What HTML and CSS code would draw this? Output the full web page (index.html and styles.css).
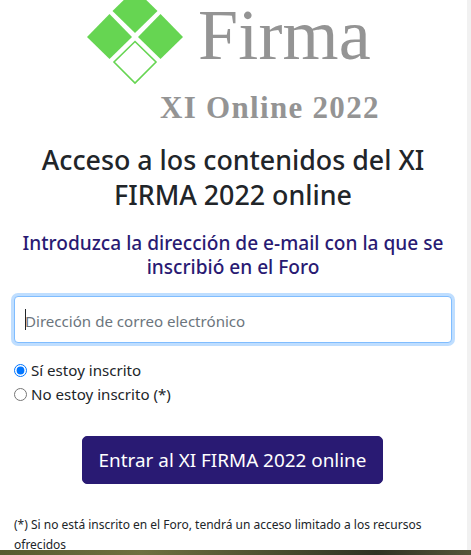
FILE: index.html
```html
<!DOCTYPE html>
<html lang="es">

<head>
    <meta charset="UTF-8">
    <meta name="viewport" content="width=device-width, initial-scale=1.0">
    <title>Acceso XI FIRMA 2022 online</title>
    <link rel="stylesheet" href="styles.css">
</head>

<body>
    <div class="card">
        <!-- Logo -->
        <div class="logo">
            <div class="logo-top">
                <svg class="logo-mark" width="98" height="86" viewBox="0 0 98 86">
                    <polygon points="49,-11 71.5,11 49,33 26.5,11" fill="#66d552"/>
                    <polygon points="23.5,14 46,37 23.5,59 1,37" fill="#66d552"/>
                    <polygon points="74.5,14 97,37 74.5,59 52,37" fill="#66d552"/>
                    <polygon points="49,41.5 70,62 49,83 28,62" fill="#fff" stroke="#66d552" stroke-width="1.6"/>
                </svg>
                <span class="logo-name">Firma</span>
            </div>
            <span class="logo-sub">XI Online 2022</span>
        </div>

        <h1 class="title">Acceso a los contenidos del XI<br>FIRMA 2022 online</h1>
        <h2 class="subtitle">Introduzca la dirección de e-mail con la que se inscribió en el Foro</h2>

        <form class="access-form">
            <div class="input-wrap">
                <input class="email-input" type="text" placeholder="Dirección de correo electrónico">
                <span class="caret"></span>
            </div>

            <div class="radio-group">
                <label class="radio-row"><input type="radio" name="inscrito" checked> Sí estoy inscrito</label>
                <label class="radio-row"><input type="radio" name="inscrito"> No estoy inscrito (*)</label>
            </div>

            <div class="button-row">
                <button class="submit-button" type="button">Entrar al XI FIRMA 2022 online</button>
            </div>
        </form>

        <p class="note">(*) Si no está inscrito en el Foro, tendrá un acceso limitado a los recursos ofrecidos</p>
    </div>
    <div class="photo-strip"></div>
</body>

</html>
```

FILE: styles.css
```css
html,
body {
    height: 100%;
}

body {
    font-family: "Noto Sans", "Open Sans", Arial, sans-serif;
    margin: 0;
    padding: 0;
    color: #212529;
    background: #f1f1f1;
    overflow: hidden;
    display: flex;
    flex-direction: column;
}

.card {
    width: 467px;
    height: 550px;
    flex: none;
    box-sizing: border-box;
    padding: 0 15px 0 14px;
    background: #fff;
}

.logo {
    height: 142px;
}

.logo-top {
    display: flex;
    align-items: flex-start;
    height: 86px;
    padding-left: 72px;
}

.logo-name {
    margin: 2px 0 0 14px;
    font-family: "Liberation Serif", serif;
    font-size: 72px;
    line-height: 66px;
    letter-spacing: 0.2px;
    color: #949494;
}

.logo-sub {
    display: block;
    margin: 5px 0 0 146px;
    font-family: "Liberation Serif", serif;
    font-size: 31px;
    line-height: 34px;
    font-weight: bold;
    letter-spacing: 1.3px;
    white-space: nowrap;
    color: #949494;
}

.title {
    margin: 0 0 19px;
    font-size: 26.8px;
    line-height: 35px;
    font-weight: 500;
    text-align: center;
}

.subtitle {
    margin: 0 0 17px;
    font-size: 19.1px;
    line-height: 24px;
    font-weight: 500;
    text-align: center;
    color: #291a73;
}

.input-wrap {
    position: relative;
}

.email-input {
    display: block;
    box-sizing: border-box;
    width: 100%;
    height: 47px;
    padding: 2px 10px 0;
    font-family: inherit;
    font-size: 15.1px;
    color: #495057;
    border: 1px solid #80bdff;
    border-radius: 4px;
    box-shadow: 0 0 0 3px #bfdeff;
    outline: none;
}

.email-input::placeholder {
    color: #6c757d;
    opacity: 1;
}

.caret {
    position: absolute;
    left: 11px;
    top: 13px;
    width: 1px;
    height: 21px;
    background: #212529;
}

.radio-group {
    margin-top: 15px;
}

.radio-row {
    display: flex;
    align-items: center;
    gap: 4px;
    height: 24px;
    font-size: 15.1px;
}

.radio-row input {
    margin: 0;
    width: 13px;
    height: 13px;
}

.button-row {
    margin-top: 30px;
    padding-right: 1px;
    display: flex;
    justify-content: center;
}

.submit-button {
    width: 301px;
    height: 48px;
    font-family: inherit;
    font-size: 18.9px;
    color: #fff;
    background: #291a73;
    border: 1px solid #291a73;
    border-radius: 5px;
}

.note {
    margin: 31px 0 0;
    font-size: 12px;
    line-height: 20px;
}

.photo-strip {
    flex: 1;
    background: linear-gradient(90deg, #565a2f, #6f7040 30%, #41452a 65%, #2f3122 80%, #55553a);
}
```
